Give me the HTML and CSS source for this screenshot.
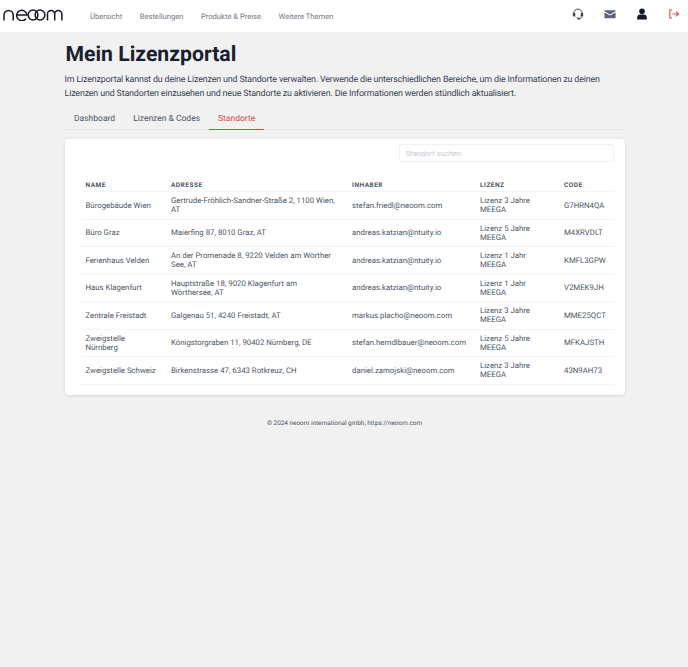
FILE: index.html
```html
<!DOCTYPE html>
<html lang="de">
<head>
    <meta charset="UTF-8">
    <meta name="viewport" content="width=device-width, initial-scale=1.0">
    <title>Mein Lizenzportal</title>
    <link rel="stylesheet" href="styles.css">
</head>
<body>

    <header class="topbar">
        <svg class="logo" viewBox="0 0 60 12" width="60" height="12" aria-label="neoom">
            <path d="M1 11.5V6a4.6 4.6 0 0 1 9.2 0v5.5"/>
            <path d="M23 9.6a5.2 5.2 0 1 1 1-3.6H14"/>
            <circle cx="30" cy="6" r="4.9"/>
            <circle cx="37" cy="6" r="4.9"/>
            <path d="M44.5 11.5V5a3.6 3.6 0 0 1 7.2 0v6.5M51.7 5a3.6 3.6 0 0 1 7.2 0v6.5"/>
        </svg>
        <nav class="mainnav">
            <a href="#">Übersicht</a>
            <a href="#">Bestellungen</a>
            <a href="#">Produkte &amp; Preise</a>
            <a href="#">Weitere Themen</a>
        </nav>
        <div class="topicons">
            <svg viewBox="0 0 12 12" width="12" height="12" fill="none" stroke="#3b4250" stroke-width="1">
                <path d="M1.7 6.5V5.4a4.3 4.3 0 0 1 8.6 0v1.1"/>
                <path d="M3.4 8.6a3.4 3.4 0 0 0 5.2 0" stroke="#9aa0ab"/>
                <rect x=".8" y="5" width="2.5" height="3.6" rx="1" fill="#3b4250" stroke="none"/>
                <rect x="8.7" y="5" width="2.5" height="3.6" rx="1" fill="#3b4250" stroke="none"/>
                <path d="M10 8.4c0 1.6-1.4 2.4-3 2.4" stroke-width=".9"/>
                <circle cx="6.4" cy="10.8" r="1" fill="#3b4250" stroke="none"/>
            </svg>
            <svg viewBox="0 0 12 12" width="12" height="12">
                <path d="M1 2.2h10a.6.6 0 0 1 .6.6v.5L6 6.4.4 3.3v-.5a.6.6 0 0 1 .6-.6z" fill="#59627a"/>
                <path d="M.4 4.5 6 7.6l5.6-3.1v5a.7.7 0 0 1-.7.7H1.1a.7.7 0 0 1-.7-.7z" fill="#59627a"/>
            </svg>
            <svg viewBox="0 0 12 12" width="12" height="12" fill="#111827">
                <circle cx="6" cy="3.2" r="2.8"/>
                <path d="M1.2 11.4V9.6c0-1.9 1.5-3 3-3h3.6c1.5 0 3 1.1 3 3v1.8z"/>
            </svg>
            <svg viewBox="0 0 12 12" width="12" height="12" fill="none" stroke="#e0505a" stroke-width="1.2">
                <path d="M4 2H1.8v8H4"/>
                <path d="M4.4 6h6M8 3.6 10.4 6 8 8.4"/>
            </svg>
        </div>
    </header>

    <main class="content">
        <h1>Mein Lizenzportal</h1>
        <p class="intro">Im Lizenzportal kannst du deine Lizenzen und Standorte verwalten. Verwende die unterschiedlichen Bereiche, um die Informationen zu deinen Lizenzen und Standorten einzusehen und neue Standorte zu aktivieren. Die Informationen werden stündlich aktualisiert.</p>

        <div class="tabs">
            <a href="#">Dashboard</a>
            <a href="#">Lizenzen &amp; Codes</a>
            <a href="#" class="active">Standorte</a>
        </div>

        <section class="card">
            <div class="search-row">
                <input type="text" class="search" placeholder="Standort suchen">
            </div>
            <table>
                <thead>
                    <tr>
                        <th class="col-name">Name</th>
                        <th class="col-address">Adresse</th>
                        <th class="col-owner">Inhaber</th>
                        <th class="col-license">Lizenz</th>
                        <th>Code</th>
                    </tr>
                </thead>
                <tbody>
                    <tr>
                        <td>Bürogebäude Wien</td>
                        <td>Gertrude-Fröhlich-Sandner-Straße 2, 1100 Wien, AT</td>
                        <td>stefan.friedl@neoom.com</td>
                        <td>Lizenz 3 Jahre MEEGA</td>
                        <td>G7HRN4QA</td>
                    </tr>
                    <tr>
                        <td>Büro Graz</td>
                        <td>Maierfing 87, 8010 Graz, AT</td>
                        <td>andreas.katzian@ntuity.io</td>
                        <td>Lizenz 5 Jahre MEEGA</td>
                        <td>M4XRVDLT</td>
                    </tr>
                    <tr>
                        <td>Ferienhaus Velden</td>
                        <td>An der Promenade 8, 9220 Velden am Wörther See, AT</td>
                        <td>andreas.katzian@ntuity.io</td>
                        <td>Lizenz 1 Jahr MEEGA</td>
                        <td>KMFL3GPW</td>
                    </tr>
                    <tr>
                        <td>Haus Klagenfurt</td>
                        <td>Hauptstraße 18, 9020 Klagenfurt am Wörthersee, AT</td>
                        <td>andreas.katzian@ntuity.io</td>
                        <td>Lizenz 1 Jahr MEEGA</td>
                        <td>V2MEK9JH</td>
                    </tr>
                    <tr>
                        <td>Zentrale Freistadt</td>
                        <td>Galgenau 51, 4240 Freistadt, AT</td>
                        <td>markus.placho@neoom.com</td>
                        <td>Lizenz 3 Jahre MEEGA</td>
                        <td>MME25QCT</td>
                    </tr>
                    <tr>
                        <td>Zweigstelle Nürnberg</td>
                        <td>Königstorgraben 11, 90402 Nürnberg, DE</td>
                        <td>stefan.herndlbauer@neoom.com</td>
                        <td>Lizenz 5 Jahre MEEGA</td>
                        <td>MFKAJSTH</td>
                    </tr>
                    <tr>
                        <td>Zweigstelle Schweiz</td>
                        <td>Birkenstrasse 47, 6343 Rotkreuz, CH</td>
                        <td>daniel.zamojski@neoom.com</td>
                        <td>Lizenz 3 Jahre MEEGA</td>
                        <td>43N9AH73</td>
                    </tr>
                </tbody>
            </table>
        </section>

        <footer class="copyright">© 2024 neoom international gmbh, https://neoom.com</footer>
    </main>

</body>
</html>
```

FILE: styles.css
```css
body {
    font-family: Roboto, Arial, sans-serif;
    background: #f1f1f2;
    color: #374151;
    margin: 0;
    text-rendering: geometricPrecision;
}

a {
    text-decoration: none;
    color: inherit;
}

.topbar {
    display: flex;
    align-items: center;
    height: 32px;
    background: white;
    padding: 0 8px 0 3px;
}

.logo {
    fill: none;
    stroke: #15181f;
    stroke-width: 1.5;
    margin-top: -3px;
}

.mainnav {
    display: flex;
    gap: 17.5px;
    margin-left: 27px;
    font-size: 7.6px;
    color: #727986;
}

.topicons {
    display: flex;
    gap: 20px;
    margin-left: auto;
    margin-top: -4px;
}

.content {
    width: 560px;
    margin: 0 auto;
    padding-left: 1px;
}

h1 {
    font-size: 21.2px;
    line-height: 28px;
    margin: 9px 0 0;
    padding-left: 1px;
    color: #1a2030;
}

.intro {
    font-size: 8.9px;
    letter-spacing: -0.15px;
    line-height: 14px;
    margin: 4px 0 0;
    color: #374151;
}

.tabs {
    display: flex;
    font-size: 8.5px;
    height: 24px;
    margin-top: 4px;
    padding-left: 0.5px;
    border-bottom: 1px solid #e5e7eb;
    color: #4b5563;
}

.tabs a {
    padding: 9px 9px 0;
    height: 15px;
}

.tabs a.active {
    color: #c9503f;
    border-bottom: 1px solid #d0503c;
}

.card {
    background: white;
    border-radius: 4px;
    box-shadow: 0 1px 3px rgba(0, 0, 0, 0.12);
    margin-top: 9px;
    padding: 5px 11px 10px 16px;
}

.search-row {
    display: flex;
    justify-content: flex-end;
}

.search {
    width: 215px;
    height: 18px;
    box-sizing: border-box;
    border: 1px solid #f0f1f3;
    border-radius: 2px;
    padding: 0 6px;
    font-family: inherit;
    font-size: 7.6px;
}

.search::placeholder {
    color: #c4c8cf;
}

table {
    width: 100%;
    border-collapse: collapse;
    table-layout: fixed;
    margin-top: 14px;
    font-size: 7.8px;
    line-height: 9px;
    color: #4b5563;
}

th {
    text-align: left;
    font-size: 6.5px;
    font-weight: 700;
    letter-spacing: 0.5px;
    text-transform: uppercase;
    color: #4b5563;
    padding: 5px 5px 1px;
    height: 6px;
}

.col-name { width: 75.5px; }
.col-address { width: 171px; }
.col-owner { width: 118px; }
.col-license { width: 74px; }

td {
    border-top: 1px solid #f3f4f6;
    border-bottom: 1px solid #f3f4f6;
    height: 26.5px;
    padding: 0 5px;
}

/* force the same line breaks as the narrower original columns */
td:nth-child(1) { padding-right: 9px; }
td:nth-child(2) { padding-right: 11px; }
td:nth-child(4) { padding-right: 15px; }

.copyright {
    text-align: center;
    font-size: 6.4px;
    line-height: 8px;
    margin-top: 24px;
    color: #4b5563;
}
```
